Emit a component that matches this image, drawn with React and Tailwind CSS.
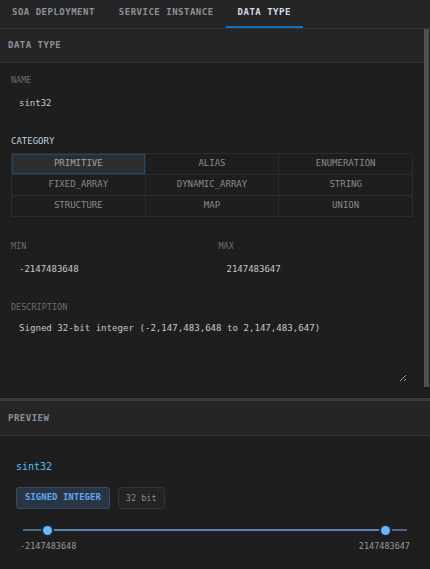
import React, { useState } from 'react';

const categorias = [
  'PRIMITIVE', 'ALIAS', 'ENUMERATION',
  'FIXED_ARRAY', 'DYNAMIC_ARRAY', 'STRING',
  'STRUCTURE', 'MAP', 'UNION',
];

const tabs = ['SOA DEPLOYMENT', 'SERVICE INSTANCE', 'DATA TYPE'];

export default function App() {
  const [tabActiva, setTabActiva] = useState('DATA TYPE');
  const [categoria, setCategoria] = useState('PRIMITIVE');
  const [nombre, setNombre] = useState('sint32');
  const [min, setMin] = useState('-2147483648');
  const [max, setMax] = useState('2147483647');
  const [descripcion, setDescripcion] = useState('Signed 32-bit integer (-2,147,483,648 to 2,147,483,647)');

  return (
    <div className="w-[430px] h-[569px] bg-[#1e1e1e] flex flex-col overflow-hidden font-['DejaVu_Sans_Mono',monospace]">

      {/* Tabs */}
      <div className="h-[29px] shrink-0 flex bg-[#252526] border-b border-[#333]">
        {tabs.map((t) => (
          <button
            key={t}
            onClick={() => setTabActiva(t)}
            className={`px-3 h-full text-[9px] font-bold tracking-[0.5px] border-b-2 ${tabActiva === t ? 'text-[#d3dbe4] border-[#0e70c0]' : 'text-[#8a929c] border-transparent'}`}
          >
            {t}
          </button>
        ))}
      </div>

      {/* Panel superior */}
      <div className="h-[368px] shrink-0 flex">
        <div className="flex-1 flex flex-col min-w-0">
          <div className="h-[34px] shrink-0 flex items-center px-2 bg-[#252526] border-b border-[#333]">
            <span className="text-[9px] font-bold tracking-[0.5px] text-[#8a929c]">DATA TYPE</span>
          </div>

          <div className="flex-1 px-[11px] pt-[12px]">
            <label className="block text-[8.5px] leading-[10px] text-[#6c6c6c]">NAME</label>
            <input
              value={nombre}
              onChange={(e) => setNombre(e.target.value)}
              className="mt-[6px] w-full h-[24px] px-[8px] bg-transparent text-[9px] text-[#c8c8c8] outline-none"
            />

            <label className="block mt-[21px] text-[9px] leading-[10px] text-[#c3d0dd]">CATEGORY</label>
            <div className="mt-[7px] grid grid-cols-3 gap-px bg-[#2c2c2c] border border-[#2c2c2c]">
              {categorias.map((c) => (
                <button
                  key={c}
                  onClick={() => setCategoria(c)}
                  className={`h-[20px] text-[9px] ${categoria === c ? 'bg-[#2d2e31] text-[#a2a2a2] outline outline-1 -outline-offset-1 outline-[#1d4a72]' : 'bg-[#1e1e1e] text-[#8a8a8a]'}`}
                >
                  {c}
                </button>
              ))}
            </div>

            <div className="mt-[24px] grid grid-cols-2 gap-[13px]">
              <div>
                <label className="block text-[8.5px] leading-[10px] text-[#6c6c6c]">MIN</label>
                <input
                  value={min}
                  onChange={(e) => setMin(e.target.value)}
                  className="mt-[6px] w-full h-[24px] px-[8px] bg-transparent text-[9px] text-[#c8c8c8] outline-none"
                />
              </div>
              <div>
                <label className="block text-[8.5px] leading-[10px] text-[#6c6c6c]">MAX</label>
                <input
                  value={max}
                  onChange={(e) => setMax(e.target.value)}
                  className="mt-[6px] w-full h-[24px] px-[8px] bg-transparent text-[9px] text-[#c8c8c8] outline-none"
                />
              </div>
            </div>

            <label className="block mt-[21px] text-[8.5px] leading-[10px] text-[#6c6c6c]">DESCRIPTION</label>
            <textarea
              value={descripcion}
              onChange={(e) => setDescripcion(e.target.value)}
              className="mt-[4px] block w-[396px] h-[66px] px-[8px] py-[6px] bg-transparent text-[9.1px] leading-[12px] text-[#c8c8c8] outline-none"
            />
          </div>
        </div>

        {/* Barra de scroll */}
        <div className="w-[6px] shrink-0">
          <div className="w-[5px] h-[358px] bg-[#4f4f4f]"></div>
        </div>
      </div>

      {/* Separador */}
      <div className="h-px shrink-0 bg-[#181818]"></div>
      <div className="h-[3px] shrink-0 bg-[#3a3a3a]"></div>

      {/* Preview */}
      <div className="h-[35px] shrink-0 flex items-center px-2 pt-[2px] bg-[#252526] border-b border-[#333]">
        <span className="text-[9px] font-bold tracking-[0.5px] text-[#8a929c]">PREVIEW</span>
      </div>

      <div className="flex-1 px-4 pt-[25px]">
        <div className="text-[10px] leading-[12px] text-[#5cb8f5]">{nombre}</div>

        <div className="mt-[14px] flex gap-2">
          <span className="h-[22px] px-[8px] flex items-center rounded-[3px] bg-[#2a3544] border border-[#3b4a5e] text-[9px] font-bold text-[#62a6f0]">
            SIGNED INTEGER
          </span>
          <span className="h-[22px] px-[7px] flex items-center rounded-[3px] bg-[#232323] border border-[#333] text-[8.5px] text-[#8a8a8a]">
            32 bit
          </span>
        </div>

        <div className="mt-[16px] px-[7px]">
          <div className="relative h-[10px] flex items-center">
            <div className="w-full h-[2px] bg-[#4b6686]"></div>
            <div className="absolute left-[24px] right-[21px] h-[2px] bg-[#5a80ad]"></div>
            <div className="absolute left-[20px] w-[9px] h-[9px] rounded-full bg-[#6cb6f8] ring-2 ring-[#1a2636]"></div>
            <div className="absolute left-[358px] w-[9px] h-[9px] rounded-full bg-[#6cb6f8] ring-2 ring-[#1a2636]"></div>
          </div>
        </div>
        <div className="mt-[5px] px-[4px] flex justify-between text-[8.5px] leading-[12px] text-[#9a9a9a]">
          <span>{min}</span>
          <span>{max}</span>
        </div>
      </div>
    </div>
  );
}
